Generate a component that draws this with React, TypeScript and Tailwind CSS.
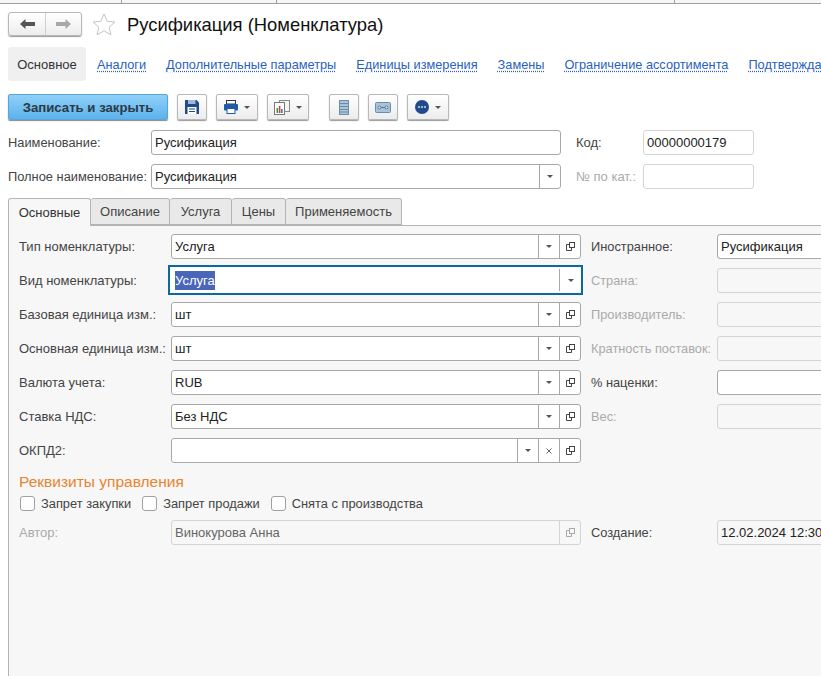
import React from 'react';

const Arrow = ({ className = 'text-[#555]' }: { className?: string }) => (
  <svg width="6" height="3" viewBox="0 0 6 3" className={className}>
    <path d="M0 0h6L3 3z" fill="currentColor" />
  </svg>
);

const OpenIcon = ({ dim = false }: { dim?: boolean }) => (
  <svg width="9" height="9" viewBox="0 0 9 9" fill="none" stroke={dim ? '#aaa' : '#444'} strokeWidth="1">
    <rect x="3.5" y="0.5" width="5" height="5" />
    <path d="M3.5 2.5H0.5v6h5V5.5" />
  </svg>
);

const Side = ({ children, dim = false }: { children: React.ReactNode; dim?: boolean }) => (
  <div className={`flex h-full w-[21px] shrink-0 items-center justify-center border-l ${dim ? 'border-[#d4d4d4]' : 'border-[#a8a8a8]'}`}>
    {children}
  </div>
);

const Field = ({ value, wide = 'w-[410px]', dim = false, children }: { value?: string; wide?: string; dim?: boolean; children?: React.ReactNode }) => (
  <div className={`flex h-[25px] shrink-0 items-center rounded-[3px] border ${wide} ${dim ? 'border-[#d4d4d4] bg-[#f7f7f7] text-[#666]' : 'border-[#a8a8a8] bg-white text-[#222]'}`}>
    <span className="min-w-0 flex-1 truncate pl-[3px]">{value}</span>
    {children}
  </div>
);

const PlainField = ({ value }: { value?: string }) => (
  <div className="flex h-[25px] w-[111px] shrink-0 items-center rounded-[3px] border border-[#d4d4d4] bg-white pl-[3px] text-[#222]">
    {value}
  </div>
);

const ToolButton = ({ wide, children }: { wide: string; children: React.ReactNode }) => (
  <div className={`flex h-[26px] shrink-0 items-center justify-center gap-[6px] rounded-[2px] border border-[#b8b8b8] bg-gradient-to-b from-white to-[#ececec] shadow-[0_1px_1px_#999] ${wide}`}>
    {children}
  </div>
);

const MainRow = ({ label, value, right, rightValue, rightDim = false }: { label: string; value: string; right: string; rightValue?: string; rightDim?: boolean }) => (
  <div className="flex h-[25px] items-center">
    <span className="w-[152px] shrink-0 whitespace-nowrap text-[#444]">{label}</span>
    <Field value={value}>
      <Side><Arrow /></Side>
      <Side><OpenIcon /></Side>
    </Field>
    <span className={`ml-[10px] w-[126px] shrink-0 whitespace-nowrap text-[12.8px] ${rightDim ? 'text-[#aaa]' : 'text-[#444]'}`}>{right}</span>
    <div className={`h-[25px] w-[120px] shrink-0 rounded-[3px] border pl-[3px] leading-[23px] ${rightDim ? 'border-[#d4d4d4] bg-[#f7f7f7]' : 'border-[#a8a8a8] bg-white text-[#222]'}`}>
      {rightValue}
    </div>
  </div>
);

const Check = ({ label }: { label: string }) => (
  <div className="flex items-center gap-[6px]">
    <div className="h-[15px] w-[15px] rounded-[3px] border border-[#a0a0a0] bg-white" />
    <span className="text-[12.85px] text-[#444]">{label}</span>
  </div>
);

const links = ['Аналоги', 'Дополнительные параметры', 'Единицы измерения', 'Замены', 'Ограничение ассортимента', 'Подтверждающие'];
const tabs = [
  { name: 'Описание', wide: 'w-[79px]' },
  { name: 'Услуга', wide: 'w-[62px]' },
  { name: 'Цены', wide: 'w-[54px]' },
  { name: 'Применяемость', wide: 'w-[116px]' },
];

export default function App() {
  return (
    <div className="h-[676px] w-[821px] overflow-hidden bg-white font-['Liberation_Sans',Arial,sans-serif] text-[13px] leading-[15px]">
      {/* window strip */}
      <div className="flex h-[4px] border-b border-[#a0a0a0] bg-[#f6f6f6]">
        <div className="w-[122px] border-r border-[#a0a0a0]" />
        <div className="w-[155px] border-r border-[#a0a0a0]" />
        <div className="w-[398px] border-r border-[#a0a0a0]" />
      </div>

      {/* title */}
      <div className="mt-[8px] flex h-[24px] items-center pl-[8px]">
        <div className="flex h-[24px] w-[74px] rounded-[3px] border border-[#b8b8b8] bg-gradient-to-b from-white to-[#ededed] shadow-[0_1px_1px_#999]">
          <div className="flex w-[37px] items-center justify-center border-r border-[#cfcfcf]">
            <svg width="15" height="10" viewBox="0 0 15 10"><path d="M0 5 5.5 0v3H15v4H5.5v3z" fill="#555" /></svg>
          </div>
          <div className="flex flex-1 items-center justify-center">
            <svg width="15" height="10" viewBox="0 0 15 10"><path d="M15 5 9.5 0v3H0v4h9.5v3z" fill="#a8a8a8" /></svg>
          </div>
        </div>
        <svg width="24" height="23" viewBox="0 0 24 23" className="ml-[10px] shrink-0" fill="#fff" stroke="#c4c4c4" strokeWidth="1">
          <path d="M12 1l3.2 7.3 7.8.7-5.9 5.2 1.8 7.7L12 17.8 5.1 21.9l1.8-7.7L1 9l7.8-.7z" />
        </svg>
        <h1 className="ml-[11px] whitespace-nowrap text-[18.4px] font-normal text-[#111]">Русификация (Номенклатура)</h1>
      </div>

      {/* sections */}
      <div className="mt-[11px] flex h-[34px] items-center whitespace-nowrap pl-[8px]">
        <div className="flex h-[34px] w-[78px] shrink-0 items-center justify-center rounded-[3px] bg-[#f0f0f0] text-[#333]">Основное</div>
        <div className="ml-[11px] flex gap-[20px] text-[12.75px]">
          {links.map((l) => (
            <span key={l} className="text-[#2a5fc0] underline decoration-dotted underline-offset-2">{l}</span>
          ))}
        </div>
      </div>

      {/* toolbar */}
      <div className="mt-[13px] flex h-[26px] items-center pl-[8px]">
        <div className="flex h-[26px] w-[160px] shrink-0 items-center justify-center rounded-[2px] border border-[#5aa5d8] bg-gradient-to-b from-[#8fd0f8] to-[#5cb2ec] text-[13.2px] font-bold text-[#2b3a45] shadow-[0_1px_1px_#888]">
          Записать и закрыть
        </div>
        <div className="ml-[9px]">
          <ToolButton wide="w-[30px]">
            <svg width="14" height="14" viewBox="0 0 14 14">
              <path d="M0 0h11.5L14 2.5V14H0z" fill="#1f4a8c" />
              <rect x="3" y="0" width="7.5" height="4" fill="#9db8dc" />
              <rect x="2.5" y="7" width="9" height="7" fill="#fff" />
              <path d="M4 9h6M4 11.5h6" stroke="#1f4a8c" />
            </svg>
          </ToolButton>
        </div>
        <div className="ml-[9px]">
          <ToolButton wide="w-[42px]">
            <svg width="14" height="14" viewBox="0 0 14 14">
              <rect x="2.5" y="0.5" width="9" height="3.5" fill="#fff" stroke="#333" />
              <rect x="0" y="4" width="14" height="6.5" rx="1" fill="#1f5ca8" />
              <rect x="3" y="8.5" width="8" height="5" fill="#fff" stroke="#1f5ca8" />
            </svg>
            <Arrow />
          </ToolButton>
        </div>
        <div className="ml-[9px]">
          <ToolButton wide="w-[42px]">
            <svg width="16" height="15" viewBox="0 0 16 15">
              <rect x="5.5" y="0.5" width="10" height="11" fill="#f4f4f4" stroke="#888" />
              <rect x="0.5" y="2.5" width="10" height="12" fill="#fff" stroke="#777" />
              <rect x="2.5" y="8" width="1.6" height="5" fill="#3a9a3a" />
              <rect x="4.8" y="6" width="1.6" height="7" fill="#d43c3c" />
              <rect x="7" y="9" width="1.6" height="4" fill="#3a72c0" />
            </svg>
            <Arrow />
          </ToolButton>
        </div>
        <div className="ml-[20px]">
          <ToolButton wide="w-[30px]">
            <svg width="10" height="15" viewBox="0 0 10 15">
              <rect x="0.5" y="0.5" width="9" height="14" fill="#a9c4da" stroke="#6c8ca8" />
              <path d="M1 3.5h8M1 6.5h8M1 9.5h8M1 12h8" stroke="#6c8ca8" />
            </svg>
          </ToolButton>
        </div>
        <div className="ml-[9px]">
          <ToolButton wide="w-[30px]">
            <svg width="16" height="11" viewBox="0 0 16 11" fill="none">
              <rect x="0.5" y="0.5" width="15" height="10" rx="1" fill="#a9c4da" stroke="#6c8ca8" />
              <circle cx="4.5" cy="5.5" r="1.5" stroke="#55748f" fill="#dbe7f0" />
              <circle cx="11.5" cy="5.5" r="1.5" stroke="#55748f" fill="#dbe7f0" />
              <path d="M6 5.5h4" stroke="#55748f" />
            </svg>
          </ToolButton>
        </div>
        <div className="ml-[9px]">
          <ToolButton wide="w-[42px]">
            <svg width="14" height="14" viewBox="0 0 14 14">
              <circle cx="7" cy="7" r="7" fill="#1f4a8c" />
              <path d="M3.2 6.2h1.6v1.6H3.2zM6.2 6.2h1.6v1.6H6.2zM9.2 6.2h1.6v1.6H9.2z" fill="#fff" />
            </svg>
            <Arrow />
          </ToolButton>
        </div>
      </div>

      {/* header fields */}
      <div className="mt-[10px] flex h-[25px] items-center pl-[8px]">
        <span className="w-[143px] shrink-0 text-[12.85px] text-[#444]">Наименование:</span>
        <Field value="Русификация" />
        <span className="ml-[15px] w-[67px] shrink-0 text-[#444]">Код:</span>
        <PlainField value="00000000179" />
      </div>
      <div className="mt-[9px] flex h-[25px] items-center pl-[8px]">
        <span className="w-[143px] shrink-0 whitespace-nowrap text-[12.85px] text-[#444]">Полное наименование:</span>
        <Field value="Русификация">
          <Side><Arrow /></Side>
        </Field>
        <span className="ml-[15px] w-[67px] shrink-0 whitespace-nowrap text-[#aaa]">№ по кат.:</span>
        <PlainField />
      </div>

      {/* tabs */}
      <div className="mt-[9px] flex h-[27px] pl-[8px]">
        <div className="relative z-10 flex h-[28px] w-[83px] items-center justify-center rounded-t-[3px] border border-b-0 border-[#b4b4b4] bg-[#f7f7f7] text-[#333]">Основные</div>
        {tabs.map((t) => (
          <div key={t.name} className={`flex items-center justify-center rounded-t-[3px] border border-l-0 border-[#b4b4b4] bg-[#e9e9e9] text-[#444] ${t.wide}`}>{t.name}</div>
        ))}
      </div>

      {/* panel */}
      <div className="ml-[8px] h-[452px] border-l border-t border-[#b4b4b4] bg-[#f7f7f7] pl-[10px] pt-[8px]">
        <div className="flex w-[830px] flex-col gap-[9px]">
          <MainRow label="Тип номенклатуры:" value="Услуга" right="Иностранное:" rightValue="Русификация" />

          <div className="flex h-[25px] items-center">
            <span className="w-[149px] shrink-0 text-[#444]">Вид номенклатуры:</span>
            <div className="mb-[1px] flex h-[30px] w-[415px] shrink-0 items-center border-[2px] border-[#0a6a9e] bg-white">
              <span className="flex-1 pl-[5px]">
                <span className="bg-[#4a66b8] py-[2px] text-white">Услуга</span>
              </span>
              <div className="flex h-[22px] w-[22px] items-center justify-center border-l border-[#a8a8a8]">
                <Arrow />
              </div>
            </div>
            <span className="ml-[8px] w-[126px] shrink-0 text-[12.8px] text-[#aaa]">Страна:</span>
            <div className="h-[25px] w-[120px] shrink-0 rounded-[3px] border border-[#d4d4d4] bg-[#f7f7f7]" />
          </div>

          <MainRow label="Базовая единица изм.:" value="шт" right="Производитель:" rightDim />
          <MainRow label="Основная единица изм.:" value="шт" right="Кратность поставок:" rightDim />
          <MainRow label="Валюта учета:" value="RUB" right="% наценки:" />
          <MainRow label="Ставка НДС:" value="Без НДС" right="Вес:" rightDim />

          <div className="flex h-[25px] items-center">
            <span className="w-[152px] shrink-0 text-[#444]">ОКПД2:</span>
            <Field>
              <Side><Arrow /></Side>
              <Side>
                <svg width="6" height="6" viewBox="0 0 6 6" stroke="#666" strokeWidth="1"><path d="M0.5 0.5l5 5M5.5 0.5l-5 5" /></svg>
              </Side>
              <Side><OpenIcon /></Side>
            </Field>
          </div>
        </div>

        <h2 className="mt-[8px] flex h-[20px] items-center text-[15.5px] font-normal text-[#e8842c]">Реквизиты управления</h2>
        <div className="mt-[3px] flex h-[18px] items-center gap-[11px] pl-[1px]">
          <Check label="Запрет закупки" />
          <Check label="Запрет продажи" />
          <Check label="Снята с производства" />
        </div>

        <div className="mt-[8px] flex h-[25px] w-[830px] items-center">
          <span className="w-[152px] shrink-0 text-[#aaa]">Автор:</span>
          <Field value="Винокурова Анна" dim>
            <Side dim><OpenIcon dim /></Side>
          </Field>
          <span className="ml-[10px] w-[126px] shrink-0 text-[12.8px] text-[#444]">Создание:</span>
          <div className="h-[25px] w-[120px] shrink-0 whitespace-nowrap rounded-[3px] border border-[#d4d4d4] bg-[#f7f7f7] pl-[3px] leading-[23px] text-[#222]">12.02.2024 12:30:00</div>
        </div>
      </div>
    </div>
  );
}
